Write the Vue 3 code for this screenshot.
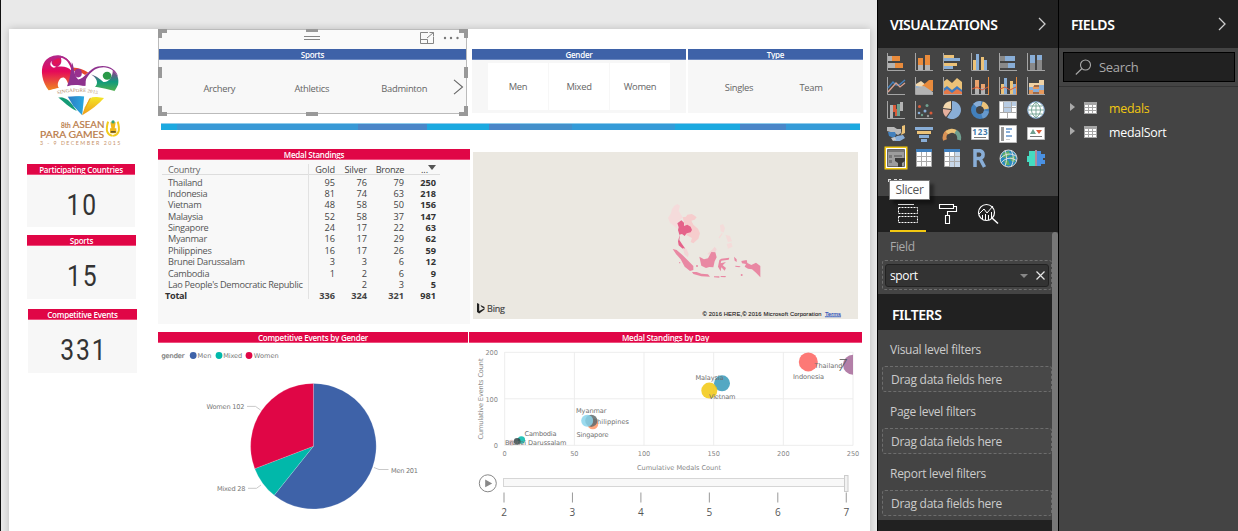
<script setup>
const stats = [
  { title: 'Participating Countries', value: '10', cls: 'first' },
  { title: 'Sports', value: '15', cls: 'second' },
  { title: 'Competitive Events', value: '331', cls: 'third' },
]
const rows = [
  ['Thailand', 95, 76, 79, 250],
  ['Indonesia', 81, 74, 63, 218],
  ['Vietnam', 48, 58, 50, 156],
  ['Malaysia', 52, 58, 37, 147],
  ['Singapore', 24, 17, 22, 63],
  ['Myanmar', 16, 17, 29, 62],
  ['Philippines', 16, 17, 26, 59],
  ['Brunei Darussalam', 3, 3, 6, 12],
  ['Cambodia', 1, 2, 6, 9],
  ["Lao People's Democratic Republic", '', 2, 3, 5],
]
const cx = 313.4
const cy = 446.2
const r = 62.8
const total = 331
const point = (n) => {
  const a = (n / total) * Math.PI * 2
  return `${cx + r * Math.sin(a)} ${cy - r * Math.cos(a)}`
}
const slice = (from, to) =>
  `M${cx} ${cy}L${point(from)}A${r} ${r} 0 ${to - from > total / 2 ? 1 : 0} 1 ${point(to)}Z`
const slices = [
  { d: slice(0, 201), fill: '#3e62a8' },
  { d: slice(201, 229), fill: '#01b8aa' },
  { d: slice(229, 331), fill: '#e00646' },
]
const bubbles = [
  { x: 511.5, y: 442.6, r: 2.8, fill: '#dfbfbf' },
  { x: 521.4, y: 440, r: 3.7, fill: '#01b8aa' },
  { x: 517.2, y: 441.3, r: 3.4, fill: '#374649' },
  { x: 592.8, y: 423.8, r: 5.5, fill: '#fe9666' },
  { x: 591.3, y: 420.8, r: 6.1, fill: '#5f6b6d' },
  { x: 587.2, y: 420.8, r: 6, fill: '#8ad4eb' },
  { x: 722, y: 383.3, r: 8, fill: '#3599b8' },
  { x: 709.3, y: 390.6, r: 8, fill: '#f2c80f' },
  { x: 808.3, y: 361.9, r: 9.5, fill: '#fd625e' },
  { x: 853, y: 364.8, r: 10, fill: '#a66999' },
]
const xTicks = [0, 50, 100, 150, 200, 250]
const yTicks = [200, 100, 0]
const days = [2, 3, 4, 5, 6, 7]
const filters = ['Visual level filters', 'Page level filters', 'Report level filters']
</script>

<template>
  <div class="app">
    <section class="canvas">
      <div class="page">
        <aside class="side">
          <svg class="logo" viewBox="100 150 280 300" width="93" height="100">
            <defs>
              <linearGradient id="lg1" x1="0" y1="0" x2="0" y2="1">
                <stop offset="0" stop-color="#b0288c" /><stop offset=".45" stop-color="#e5085a" /><stop offset="1" stop-color="#ef8a1f" />
              </linearGradient>
              <linearGradient id="lg2" x1="0" y1="0" x2="0" y2="1">
                <stop offset="0" stop-color="#9c3590" /><stop offset=".5" stop-color="#0f9a7c" /><stop offset="1" stop-color="#5fb545" />
              </linearGradient>
              <linearGradient id="lg3" x1="0" y1="0" x2="1" y2="0">
                <stop offset="0" stop-color="#2b79c2" /><stop offset="1" stop-color="#2ba9e0" />
              </linearGradient>
              <linearGradient id="lg4" x1="0" y1="0" x2="0" y2="1">
                <stop offset="0" stop-color="#f4ea28" /><stop offset="1" stop-color="#f09a1c" />
              </linearGradient>
            </defs>
            <path d="M148 272C128 248 121 211 132 190C142 171 163 163 181 166C204 171 216 187 220 207L217 238L207 256C200 232 193 230 184 234C174 244 172 256 178 264Z" fill="url(#lg1)" />
            <path d="M184 173C200 176 211 190 216 212C205 201 190 197 172 201C183 196 188 188 184 173Z" fill="#fff" />
            <path d="M181 168C204 172 214 188 218 207" fill="none" stroke="#a32f90" stroke-width="3" />
            <path d="M157 182C153 190 160 199 171 200L163 203C151 200 149 189 157 182Z" fill="#fff" />
            <ellipse cx="172" cy="184" rx="13" ry="8" transform="rotate(-28 172 184)" fill="#e21457" />
            <path d="M219 202C239 203 252 208 266 217L257 225C246 216 232 211 219 213Z" fill="#e54731" />
            <path d="M202 259C211 238 213 220 217 186C225 199 221 224 236 238C256 236 269 205 295 199C325 192 353 208 356 231C344 207 323 197 300 203C280 208 267 224 260 237C257 246 260 256 257 260C240 254 220 253 202 259Z" fill="#8e318e" />
            <ellipse cx="236" cy="219" rx="11" ry="13" fill="#9a318f" />
            <path d="M275 223C288 226 303 237 312 246C329 248 341 226 340 211C354 220 360 236 356 254C350 268 344 276 338 279L284 263C301 249 291 233 275 223Z" fill="url(#lg2)" />
            <ellipse cx="323" cy="227" rx="13" ry="12" fill="#2a9a49" />
            <path d="M175 291C190 291 204 296 215 310L232 333C211 324 192 306 175 291Z" fill="#159b76" />
            <path d="M204 289Q228 287 254 289L248 346L221 317Z" fill="url(#lg3)" />
            <path d="M248 346L256 322Q264 304 278 292L319 289Q289 323 248 346Z" fill="url(#lg4)" />
            <path d="M248 346L269 296L276 292L258 326Z" fill="#eea21b" />
            <path d="M138 274Q234 240 346 273L336 297Q240 280 152 296Z" fill="#fff" />
            <path id="arc" d="M174 283Q234 267 295 283" fill="none" />
            <text font-size="15" fill="#b0855c" font-family="Liberation Serif, serif"><textPath href="#arc" textLength="121">SINGAPORE 2015</textPath></text>
            <g fill="#b87945" stroke="#b87945" stroke-width=".6" font-family="Lato, sans-serif">
              <text x="184" y="384" font-size="20" textLength="29" lengthAdjust="spacingAndGlyphs">8th</text>
              <text x="220" y="384" font-size="30" textLength="95" lengthAdjust="spacingAndGlyphs">ASEAN</text>
              <text x="121" y="413" font-size="30" textLength="193" lengthAdjust="spacingAndGlyphs">PARA GAMES</text>
              <text x="121" y="436" font-size="16" textLength="242" stroke="none" opacity=".8">3 - 9 DECEMBER 2015</text>
            </g>
            <g fill="none" stroke="#f2cc1d" stroke-width="6">
              <path d="M326 365Q314 404 340 408M355 365Q367 404 341 408" />
            </g>
            <path d="M333 367H349L346 385H351V400H332V385H336Z" fill="#efb81a" />
            <circle cx="341" cy="366" r="5" fill="#36a276" />
            <path d="M334 396H349" stroke="#403b26" stroke-width="4" />
          </svg>
          <article v-for="s in stats" :key="s.title" class="stat" :class="s.cls">
            <h3 class="bar red">{{ s.title }}</h3>
            <div class="value">{{ s.value }}</div>
          </article>
        </aside>

        <main class="main">
          <div class="slicers">
            <div class="slicer selected">
              <div class="tools">
                <svg width="309" height="20" viewBox="0 0 309 20" fill="none" stroke="#858585">
                  <path d="M146 7.5H162M146 10.5H162" />
                  <path d="M270 3.5H262.5V14.5H275.5V8M262.5 10.5H269.5V14.5M269 9L275.5 3.5M271.5 3.5H275.5V7.5" />
                  <g fill="#777" stroke="none"><circle cx="287" cy="9" r="1.2" /><circle cx="293" cy="9" r="1.2" /><circle cx="299.500" cy="9" r="1.2" /></g>
                </svg>
              </div>
              <h3 class="bar blue">Sports</h3>
              <div class="opts sports"><span>Archery</span><span>Athletics</span><span>Badminton</span></div>
              <svg class="next" width="11" height="16" viewBox="0 0 11 16"><path d="M1 .8L9.500 8L1 15.200" fill="none" stroke="#666" stroke-width="1.100" /></svg>
              <svg class="handles" width="310" height="87" viewBox="0 0 310 87" fill="#999">
                <path d="M0 0H9V4H4V9H0ZM310 0H301V4H306V9H310ZM0 87V77H4V83H9V87ZM310 87V77H306V83H301V87ZM148 0H160V3H148ZM148 83H160V87H148ZM0 38H4V49H0ZM306 38H310V49H306Z" />
              </svg>
            </div>
            <div class="slicer gender">
              <h3 class="bar blue">Gender</h3>
              <div class="opts tiles"><span>Men</span><span>Mixed</span><span>Women</span></div>
            </div>
            <div class="slicer type">
              <h3 class="bar blue">Type</h3>
              <div class="opts types"><span>Singles</span><span>Team</span></div>
            </div>
          </div>

          <div class="strip"></div>

          <div class="middle">
            <div class="standings">
              <h3 class="bar red">Medal Standings</h3>
              <div class="table">
                <div class="tr th"><span>Country</span><span>Gold</span><span>Silver</span><span>Bronze</span><span>...<i class="sort"></i></span></div>
                <div v-for="row in rows" :key="row[0]" class="tr"><span v-for="(c, i) in row" :key="i">{{ c }}</span></div>
                <div class="tr total"><span>Total</span><span>336</span><span>324</span><span>321</span><span>981</span></div>
              </div>
            </div>
            <svg class="map" width="385" height="167" viewBox="0 0 385 167">
              <rect width="385" height="167" fill="#ebe8e1" />
              <g transform="translate(177 28) scale(.33333)">
                <path d="M72 78L82 72L90 77L86 92L92 103L98 112L90 120L84 128L82 148L72 138L60 128L54 113L62 102L66 88Z" fill="#f5dbdb" />
                <path d="M98 112L108 110L112 104L125 102L132 106L140 112L134 119L124 122L130 134L144 146L150 160L145 176L130 190L122 186L126 174L110 166L104 150L104 134Z" fill="#f6cdcd" />
                <path d="M82 130L94 121L102 128L102 138L112 134L122 140L126 150L122 157L110 160L104 168L96 162L88 164L84 150L86 142Z" fill="#e5638a" />
                <path d="M90 162L88 180L96 192L106 206L98 206L86 196L84 184Z" fill="#e5638a" />
                <path d="M98 204L110 208L116 222L114 232L104 224ZM172 222L188 208L194 200L200 208L194 220L182 226Z" fill="#f3d5d6" />
                <path d="M210 136L219 132L225 144L221 158L212 154ZM226 164L240 168L246 184L234 186ZM230 192L244 188L248 200L234 206ZM206 172L216 158L218 162L208 176Z" fill="#f4dcda" />
                <path d="M68 207L80 210L98 226L116 244L130 258L130 270L120 273L104 260L92 238L78 222Z" fill="#e988a3" />
                <path d="M126 276L140 276L154 281L174 283L180 290L154 289L130 282ZM192 289L208 289L208 293L192 292ZM212 288L228 288L226 292L212 291Z" fill="#e988a3" />
                <path d="M148 230L162 238L174 235L184 216L196 217L200 232L194 244L190 262L178 261L168 264L154 257Z" fill="#e988a3" />
                <path d="M208 240L214 236L238 233L236 239L214 242L212 250L228 246L218 256L228 264L224 272L214 262L212 274L204 260Z" fill="#e988a3" />
                <path d="M252 230L260 238L260 246L254 242ZM256 257L272 259L268 262L256 260ZM274 243L290 240L292 249L304 255L318 248L331 258V292L318 278L306 268L294 266L284 260L288 252L276 250Z" fill="#e988a3" />
                <circle cx="141" cy="258" r="3" fill="#e988a3" /><circle cx="275" cy="285" r="3" fill="#e988a3" /><circle cx="89" cy="248" r="2" fill="#e988a3" />
              </g>
              <path d="M4 151L6.200 152V159L11 156.500L8.500 155L7.500 153L11.500 155V157.500L6.200 161.500L4 160Z" fill="#222" />
              <text x="14" y="159.500" font-size="9" fill="#444" stroke="#444" stroke-width=".2" textLength="18">Bing</text>
              <text x="229.500" y="163.500" font-size="5.800" fill="#222" stroke="#222" stroke-width=".1" textLength="119" font-family="Liberation Sans">© 2016 HERE,© 2016 Microsoft Corporation</text>
              <text x="352" y="163.500" font-size="5.800" fill="#123fb4" stroke="#123fb4" stroke-width=".1" text-decoration="underline" textLength="16" font-family="Liberation Sans">Terms</text>
            </svg>
          </div>

          <div class="bottom">
            <div class="chart pie">
              <h3 class="bar red">Competitive Events by Gender</h3>
              <svg width="310" height="188" viewBox="158 343 310 188" class="axis">
                <text x="161.500" y="358" textLength="23" stroke="#777" stroke-width=".2">gender</text>
                <circle cx="193.200" cy="355.500" r="3.400" fill="#3e62a8" /><text x="197.500" y="358" textLength="14">Men</text>
                <circle cx="219" cy="355.500" r="3.400" fill="#01b8aa" /><text x="223.200" y="358" textLength="19">Mixed</text>
                <circle cx="249" cy="355.500" r="3.400" fill="#e00646" /><text x="253.800" y="358" textLength="25">Women</text>
                <path v-for="s in slices" :key="s.fill" :d="s.d" :fill="s.fill" stroke="#fff" stroke-opacity=".35" stroke-width=".5" />
                <g fill="none" stroke="#bbb" stroke-width=".8"><path d="M247 406.400H255.500L260.500 410M248 488.300H256.500L261 485M374 467.500L379 469.500H388.500" /></g>
                <text x="206.500" y="409" textLength="38">Women 102</text>
                <text x="217" y="491" textLength="28.500">Mixed 28</text>
                <text x="391" y="473" textLength="27">Men 201</text>
              </svg>
            </div>
            <div class="chart bubble">
              <h3 class="bar red">Medal Standings by Day</h3>
              <svg width="393" height="188" viewBox="469 343 393 188" class="axis">
                <defs><clipPath id="plot"><rect x="500" y="345" width="353" height="101" /></clipPath></defs>
                <g stroke="#ededed">
                  <path v-for="t in xTicks" :key="t" :d="`M${504.7 + t * 1.3932} 352V445.500`" />
                  <path v-for="t in yTicks" :key="t" :d="`M504.500 ${445.300 - t * .465}H853`" />
                </g>
                <g fill="#888">
                  <text v-for="t in xTicks" :key="'x' + t" :x="504.7 + t * 1.3932" y="456" text-anchor="middle">{{ t }}</text>
                  <text v-for="t in yTicks" :key="'y' + t" x="498" :y="448 - t * .465" text-anchor="end">{{ t }}</text>
                  <text x="637" y="470" textLength="84">Cumulative Medals Count</text>
                  <text transform="translate(483.200 439.500) rotate(-90)" textLength="81">Cumulative Events Count</text>
                </g>
                <g clip-path="url(#plot)" fill-opacity=".85"><circle v-for="(b, i) in bubbles" :key="i" :cx="b.x" :cy="b.y" :r="b.r" :fill="b.fill" /></g>
                <text x="837.500" y="371" class="frame">7</text>
                <g fill="#707070">
                  <text x="814.500" y="368" textLength="28">Thailand</text>
                  <text x="793" y="379" textLength="31">Indonesia</text>
                  <text x="695.500" y="380" textLength="28">Malaysia</text>
                  <text x="709" y="399" textLength="26.500">Vietnam</text>
                  <text x="576" y="413" textLength="30.500">Myanmar</text>
                  <text x="593" y="424" textLength="36">Philippines</text>
                  <text x="576.500" y="437" textLength="32">Singapore</text>
                  <text x="524.500" y="436" textLength="32">Cambodia</text>
                  <text x="505" y="445" textLength="61.500">Brunei Darussalam</text>
                </g>
                <circle cx="487.800" cy="483.300" r="8.500" fill="#fff" stroke="#888" /><path d="M485.200 479.500V487.300L492.200 483.400Z" fill="#888" />
                <rect x="503.500" y="478.500" width="342" height="8" fill="#f8f8f8" stroke="#d6d6d6" />
                <rect x="844.500" y="475.500" width="3.500" height="16" fill="#f2f2f2" stroke="#ccc" />
                <g v-for="(d, i) in days" :key="d">
                  <path :d="`M${504 + i * 68.45} 492.500V502.500`" stroke="#999" />
                  <text :x="504 + i * 68.45" y="516" text-anchor="middle" class="day">{{ d }}</text>
                </g>
              </svg>
            </div>
          </div>
        </main>
      </div>
    </section>

    <section class="pane viz">
      <header class="head"><h2 class="w-viz">VISUALIZATIONS</h2><svg class="chev" width="8" height="14" viewBox="0 0 8 14"><path d="M1 1L7 7L1 13" /></svg></header>
      <div class="gallery">
        <svg viewBox="0 0 18 18"><path class="ax" d="M.5 0V17.500H18" /><path fill="#b3b3b3" d="M1 3h4v5H1zM1 10h7v5H1z" /><path fill="#e98b3c" d="M5 3h8v5H5zM8 10h8v5H8z" /></svg>
        <svg viewBox="0 0 18 18"><path class="ax" d="M.5 0V17.500H18" /><path fill="#b3b3b3" d="M3 12h5v5H3zM10 12h5v5h-5z" /><path fill="#e98b3c" d="M3 5h5v7H3zM10 2h5v10h-5z" /></svg>
        <svg viewBox="0 0 18 18"><path class="ax" d="M.5 0V17.500H18" /><path fill="#ecc278" d="M1 2h10v3H1zM1 10h13v3H1z" /><path fill="#89aed7" d="M1 5h16v3H1zM1 13h9v3H1z" /></svg>
        <svg viewBox="0 0 18 18"><path class="ax" d="M.5 0V17.500H18" /><path fill="#ecc278" d="M2 7h3v10H2zM10 4h3v13h-3z" /><path fill="#89aed7" d="M5 1h3v16H5zM13 7h3v10h-3z" /></svg>
        <svg viewBox="0 0 18 18"><path class="ax" d="M.5 0V17.500H18" /><path fill="#898989" d="M1 3h5v5H1zM1 10h8v5H1z" /><path fill="#89aed7" d="M6 3h10v5H6zM9 10h7v5H9z" /></svg>
        <svg viewBox="0 0 18 18"><path class="ax" d="M.5 0V17.500H18" /><path fill="#898989" d="M3 10h5v7H3zM10 7h5v10h-5z" /><path fill="#89aed7" d="M3 2h5v8H3zM10 2h5v5h-5z" /></svg>

        <svg viewBox="0 0 18 18"><path class="ax" d="M.5 0V17.500H18" /><path d="M1 11L6 5L9 8L12 8L18 3" fill="none" stroke="#4280bd" stroke-width="1.300" /><path d="M1 15L9 6L13 10L18 6" fill="none" stroke="#d9a291" stroke-width="1.300" /></svg>
        <svg viewBox="0 0 18 18"><path class="ax" d="M.5 0V17.500H18" /><path fill="#f4d7aa" d="M1 7L6 4L11 8L14 12H1z" /><path fill="#89aed7" d="M1 9L9 10V14H1z" /><path fill="#e98b3c" d="M7 9L14 3H18V14H14z" /><path fill="#b3b3b3" d="M1 11L9 9L18 15V17H1z" /></svg>
        <svg viewBox="0 0 18 18"><path fill="#3d7bc0" d="M0 8H19V18H0z" /><path fill="#ecc278" d="M0 5L4 2L9 6L14 1L19 5V13L14 9L9 13L4 9L0 12z" /><path fill="#e67a49" d="M0 15L4 12L9 16L14 12L19 15V18H0z" /><path class="ax" d="M.5 0V17.500H19" /></svg>
        <svg viewBox="0 0 18 18"><path class="ax" d="M.5 0V17.500H18" /><path fill="#e9a36d" d="M4 3h4v9H4zM10 7h4v4h-4z" /><path fill="#b3b3b3" d="M4 12h4v5H4zM10 11h4v6h-4z" /><path d="M1 12L6 10L11 13L17 10" fill="none" stroke="#d95b39" /><path d="M17.500 0V18" stroke="#e98b3c" /></svg>
        <svg viewBox="0 0 18 18"><path class="ax" d="M.5 0V17.500H18" /><path fill="#ecc278" d="M2 7h3v10H2zM11 4h3v13h-3z" /><path fill="#89aed7" d="M5 1h3v16H5zM14 7h3v10h-3z" /><path d="M1 12L6 10L11 13L17 10" fill="none" stroke="#d95b39" /><path d="M17.500 0V18" stroke="#e98b3c" /></svg>
        <svg viewBox="0 0 18 18"><path class="ax" d="M.5 0V17.500H18" /><path fill="#f0d2a5" d="M2 6h5v4H2zM7 6h5v3H7zM12 3h5v5h-5z" /><path fill="#89aed7" d="M2 10h4v3H2zM12 8h5v5h-5zM6 12h6v3H6z" /><path fill="#e69a5e" d="M2 13h4v4H2zM6 9h6v3H6zM12 13h5v4h-5z" /><path fill="#9d6a4a" d="M7 8h5v2H7zM6 15h6v2H6z" /></svg>

        <svg viewBox="0 0 18 18"><path class="ax" d="M.5 0V17.500H18" /><path fill="#b3b3b3" d="M3 4h3v13H3zM13 1h3v9h-3z" /><path fill="#d95b39" d="M6 4h3v7H6zM8 8h2v7H8z" /><path fill="#70a090" d="M10 3h3v12h-3z" /></svg>
        <svg viewBox="0 0 18 18"><path class="ax" d="M.5 0V17.500H18" /><g fill="#d95b39"><circle cx="4.500" cy="5.500" r="1.500" /><circle cx="16" cy="12" r="1.500" /></g><g fill="#70a090"><circle cx="12" cy="4.500" r="1.500" /><circle cx="7" cy="14" r="1.200" /></g><g fill="#89aed7"><circle cx="4" cy="12" r="1.300" /><circle cx="10" cy="10" r="1.500" /></g><circle cx="13" cy="15" r="1.200" fill="#999" /></svg>
        <svg viewBox="0 0 18 18"><path fill="#89aed7" d="M9 9V0A9 9 0 1 1 4 16.500Z" /><path fill="#f2d7ad" d="M8 8V0A9 9 0 0 0 0 7Z" /><path fill="#e6b09e" d="M8 9L0 8A9 9 0 0 0 3 16Z" /></svg>
        <svg viewBox="0 0 18 18" fill="none" stroke-width="5"><circle cx="9" cy="9" r="6.500" stroke="#4280bd" /><path d="M11 2.800A6.500 6.500 0 0 1 15.500 8" stroke="#ecc278" /><path d="M4 4.500A6.500 6.500 0 0 1 10 2.600" stroke="#89aed7" /><path d="M15.500 10A6.500 6.500 0 0 1 11 15.200" stroke="#6799cd" /></svg>
        <svg viewBox="0 0 18 18"><path fill="#fff" stroke="#b8b8b8" d="M.5.5h17v17H.5z" /><path fill="#b8cce3" d="M5 1h8v5H5zM5 7h7v4H5zM13 1h4v4h-4z" /><path fill="none" stroke="#aaa" d="M4.500 1V11M1 11.500H17M12.500 1V11M5 6.500H17M8.500 12V17" /></svg>
        <svg viewBox="0 0 18 18"><circle cx="9" cy="9" r="8.300" fill="#fff" stroke="#89aed7" /><path fill="none" stroke="#70a090" stroke-width=".9" d="M1 9H17M2.500 5H15.500M2.500 13H15.500M9 1V17M9 1C3 6 3 12 9 17M9 1C15 6 15 12 9 17" /></svg>

        <svg viewBox="0 0 18 18"><path fill="#b9b9b9" d="M0 2H7L10 4H14V8L11 10L7 8L0 6Z" /><path fill="#4280bd" d="M1 7H8L9 10L7 13L2 11Z" /><path fill="#89aed7" d="M10 11L16 10L18 13L13 16L8 16L5 14Z" /><path fill="#ecc278" d="M15 1L18 0V8L14 10L15 6Z" /><path fill="#c7c7c7" d="M4 13L8 12L9 15L6 16Z" /></svg>
        <svg viewBox="0 0 18 18"><path fill="#89aed7" d="M0 2h18v3H0zM4 10h10v3H4zM6 14h6v3H6z" /><path fill="#ecc278" d="M2 6h14v3H2z" /></svg>
        <svg viewBox="0 0 18 18" fill="none" stroke-width="4"><path d="M2 15A7 7 0 0 1 5 6.500" stroke="#d99255" /><path d="M4 8A7 7 0 0 1 13 7" stroke="#ecc278" /><path d="M12.500 6.500A8 8 0 0 1 16 15" stroke="#70a090" /></svg>
        <svg viewBox="0 0 18 18"><path fill="#fff" stroke="#bbb" d="M.5 2.500h17v12H.5z" /><text x="1.200" y="9.800" font-size="8" font-weight="700" fill="#427aa9" textLength="15.500">123</text><path d="M3 12.500H15" stroke="#777" /></svg>
        <svg viewBox="0 0 18 18"><path fill="#fff" stroke="#bbb" d="M.5.5h17v17H.5z" /><path fill="#999" d="M2 2h3v14H2z" /><path fill="#89aed7" d="M7 3h6v2H7zM7 6h4v2H7zM7 10h6v2H7z" /><path fill="#ccc" d="M7 14h4v1H7z" /></svg>
        <svg viewBox="0 0 18 18"><path fill="#fff" stroke="#bbb" d="M.5 2.500h17v12H.5z" /><path fill="#70a090" d="M3 9L6 4L9 9z" /><path fill="#d95b39" d="M9 5H15L12 9z" /><path d="M3 11.500H15" stroke="#777" /></svg>

        <svg class="active" viewBox="0 0 20 20"><path fill="#9d9d9d" stroke="#666" d="M1.500 1.500h17v17h-17z" /><path fill="#777" d="M2 2h16v2H2zM3 7h3v3H3zM3 12h3v3H3zM8 7h8v2H8z" /><path fill="#3a3a3a" d="M9 10H19V13L16 15V19H12V15L9 13Z" /></svg>
        <svg class="grid" viewBox="0 0 18 18"><path fill="#fff" stroke="#aaa" d="M.5 1.500h15v16H.5z" /><path fill="#4280bd" d="M0 0h16v3H0z" /><path fill="none" stroke="#aaa" d="M0 7.500H16M0 12.500H16M5.500 3V18M10.500 3V18" /></svg>
        <svg class="grid" viewBox="0 0 18 18"><path fill="#fff" stroke="#aaa" d="M.5 1.500h15v16H.5z" /><path fill="#c8d8ea" d="M11 3h5v15h-5zM6 13h5v5H6zM6 8h5v5H6z" /><path fill="#4280bd" d="M0 0h16v3H0z" /><path fill="none" stroke="#aaa" d="M0 7.500H16M0 12.500H16M5.500 3V18M10.500 3V18" /></svg>
        <svg class="grid" viewBox="0 0 18 18"><path fill="none" stroke="#89aed7" stroke-width="3.500" d="M3 18V1.700H8A4 4 0 0 1 8 9.500H3M8 9.500L12.500 18" /></svg>
        <svg viewBox="0 0 18 18"><circle cx="9.500" cy="9.500" r="8.500" fill="#288ac0" stroke="#d8d8d8" /><g fill="#5cad66"><path d="M4 4L10 2L11 6L7 9L3 8zM11 8L16 7L16 13L12 12zM5 12L9 11L11 16H7z" /></g><path fill="none" stroke="#ddd" d="M1 10C6 4 12 4 17 7M2 14C7 8 13 8 18 12M6 1C8 7 8 12 6 17M12 1C15 7 15 12 12 18" /></svg>
        <svg viewBox="0 0 18 18"><path fill="#45dbc0" d="M2 2H8V17H2V13H0V7H2Z" /><path fill="#4a91e2" d="M9 2H14V5H18V9H16V11H18V15H14V17H9Z" /><path fill="#b18a99" d="M8 1h2v16H8z" /></svg>
        <svg viewBox="0 0 18 18"><path fill="#ddd" d="M1 6h3v3H1zM7 6h3v3H7zM12 6h3v3h-3z" /></svg>
        <div class="tip">Slicer</div>
      </div>
      <div class="tabs">
        <svg width="181" height="36" viewBox="878 196 181 36" fill="none" stroke="#fff">
          <path d="M898 204.500H914" /><path d="M898.500 207.500H917.500V213.500H898.500ZM898.500 216.500H917.500V222.500H898.500Z" stroke-dasharray="2 1" />
          <path d="M939.500 204.500H953.500V208.500H939.500ZM953.500 206.500H956.500V211.500H947.500V215M945.500 215.500H949.500V223.500H945.500Z" stroke-width="1.100" />
          <circle cx="986.500" cy="212.500" r="8" stroke-width="1.200" /><path d="M992 218L998 223.500" stroke-width="1.500" /><path d="M979 214L984 209L987 213L993 206M982.500 215V219M985.500 214V220M988.500 215V220M991.500 212V218" />
          <path d="M890 231H926" stroke="#f2c811" stroke-width="2" />
        </svg>
      </div>
      <div class="scroller">
        <div class="scroll-body">
          <div class="fieldwell">
            <label class="flabel">Field</label>
            <div class="dash outer"><div class="chip"><span>sport</span><i class="caret"></i><svg width="9" height="9" viewBox="0 0 9 9"><path d="M.5.5L8.500 8.500M8.500.5L.5 8.500" stroke="#e6e6e6" stroke-width="1.200" /></svg></div></div>
          </div>
          <h2 class="filters">FILTERS</h2>
          <div class="flist">
            <div v-for="f in filters" :key="f" class="fitem"><label>{{ f }}</label><div class="dash drop"><span>Drag data fields here</span></div></div>
          </div>
          <div class="foot"></div>
        </div>
        <div class="thumb"></div>
      </div>
    </section>

    <section class="pane fields">
      <header class="head"><h2 class="w-fields">FIELDS</h2><svg class="chev" width="8" height="14" viewBox="0 0 8 14"><path d="M1 1L7 7L1 13" /></svg></header>
      <div class="searchwrap">
        <div class="search"><svg width="17" height="17" viewBox="0 0 17 17" fill="none" stroke="#aaa" stroke-width="1.100"><circle cx="10.500" cy="6" r="5" /><path d="M7 9.500L.8 15.500" /></svg><span>Search</span></div>
      </div>
      <div class="tree">
        <div v-for="(n, i) in ['medals', 'medalSort']" :key="n" class="node">
          <i class="tri"></i>
          <svg width="13" height="12" viewBox="0 0 13 12"><path fill="#a6a6a6" d="M0 0h13v12H0z" /><path fill="#fff" d="M1 3h3v2H1zM5 3h3v2H5zM9 3h3v2H9zM1 6h3v2H1zM5 6h3v2H5zM9 6h3v2H9zM1 9h3v2H1zM5 9h3v2H5zM9 9h3v2H9z" /></svg>
          <span :class="{ hot: i === 0 }">{{ n }}</span>
        </div>
      </div>
    </section>
  </div>
</template>

<style>
html, body { overflow: hidden; background: #222; }
</style>

<style scoped>
* { box-sizing: border-box; margin: 0; padding: 0; }
svg { display: block; flex: none; }
.app { display: flex; width: 1238px; height: 531px; overflow: hidden; font-family: "Open Sans", "Noto Sans", sans-serif; }
.canvas { width: 878px; height: 531px; background: #e9e9e9; border-left: 1px solid #111; border-right: 1px solid #000; padding: 29px 0 0 8px; overflow: hidden; }
.page { display: flex; width: 861px; height: 520px; background: #fff; box-shadow: 0 0 8px rgba(0,0,0,.2); }
.side { width: 149px; padding-left: 18px; }
.logo { margin: 21px 0 14px 6px; }
.stat { width: 108px; height: 63px; background: #f7f7f7; margin-bottom: 8px; }
.stat.second { width: 109px; height: 64px; margin-bottom: 10px; }
.stat.third { width: 109px; height: 64px; margin-left: 1px; }
.bar { height: 11px; line-height: 12px; font-size: 8px; font-weight: 600; letter-spacing: -.22px; color: #fff; text-align: center; white-space: nowrap; overflow: hidden; }
.red { background: #e00646; border-bottom: 1px solid #ee4f7e; }
.blue { background: #3e62a8; border-bottom: 1px solid #6b88c0; }
.value { height: 52px; text-align: center; font: 29px/60px Roboto, sans-serif; letter-spacing: 2.2px; text-indent: 3px; color: #333; transform: scaleX(.85); }
.main { width: 709px; }
.slicers { display: flex; height: 85px; }
.slicer { background: #f7f7f7; height: 64px; margin-top: 20px; }
.slicer.selected { position: relative; width: 309px; height: 85px; margin: 0; border: 1px solid #bbb; background: #f8f8f8; }
.tools { display: flow-root; height: 19px; background: #fafafa; }
.tools svg { margin: -1px; }
.handles { position: absolute; left: -1px; top: -1px; }
.next { position: absolute; right: 2px; top: 49px; }
.gender { width: 214px; margin-left: 5px; }
.type { width: 175px; margin-left: 2px; }
.opts { display: flex; font-size: 9.400px; letter-spacing: -.3px; color: #666; align-items: center; }
.opts span { text-align: center; }
.sports { height: 54px; padding: 2px 0 0 14px; }
.sports span { width: 92.500px; }
.tiles { gap: 1px; height: 47px; margin: 3px 0 0 16px; }
.tiles span { width: 60px; height: 47px; line-height: 47px; background: #fff; }
.types { height: 53px; padding: 1px 0 0 15px; }
.types span { width: 72px; }
.strip { width: 699px; height: 7px; margin: 9px 0 19px 3px; border-top: 1px solid #8fcceb; background: linear-gradient(90deg, #1ca9e0 0 16px, #3899d6 16px 197px, #4a86c8 197px 266px, #1ca9e0 266px 328px, #4a86c8 328px 359px, #4390cb 359px 411px, #349bd8 411px 514px, #1ca9e0 514px 579px, #4a86c8 579px 625px, #349bd8 625px 689px, #1ca9e0 689px); }
.middle { display: flex; height: 175px; }
.standings { width: 312px; height: 175px; background: #f8f8f8; }
.table { position: relative; margin: 3px 0 0 4px; width: 278px; font-size: 9.200px; letter-spacing: -.3px; color: #555; }
.table::after { content: ""; position: absolute; left: 146px; top: 1px; height: 135px; border-left: 1px solid #e2e2e2; }
.tr { display: grid; grid-template-columns: 142px 31px 32px 37px 32px; height: 11.400px; line-height: 11px; white-space: nowrap; }
.tr span { text-align: right; }
.tr span:first-child { text-align: left; padding-left: 6px; }
.tr span:nth-child(n+2) { letter-spacing: 0; }
.tr span:last-child { font-weight: 700; color: #333; }
.th { height: 12px; line-height: 14px; margin-bottom: 1.500px; border-bottom: 1px solid #ddd; color: #666; }
.tr.th span:nth-child(n+2) { letter-spacing: -.1px; }
.tr.th span:nth-child(4) { letter-spacing: -.35px; }
.th span:last-child { font-weight: 400; }
.tr span:nth-child(n+2):nth-child(-n+4) { color: #444; }
.total { font-weight: 700; }
.tr.total span:first-child { padding-left: 3px; }
.tr.total span { color: #333; }
.sort { display: inline-block; border: 4px solid transparent; border-top: 5px solid #555; border-bottom: 0; margin-bottom: 3px; }
.map { margin: 3px 0 0 3px; }
.bottom { display: flex; gap: 1px; margin-top: 8px; }
.pie { width: 310px; }
.bubble { width: 393px; }
.axis { font-family: "DejaVu Sans", sans-serif; font-size: 6.600px; fill: #777; }
.axis .day { font: 10px "Open Sans", sans-serif; fill: #555; }
.axis .frame { font: italic 300 17px "Open Sans", sans-serif; fill: #555; }

.pane { height: 531px; background: #444; color: #fff; }
.viz { width: 181px; border-right: 1px solid #000; }
.fields { width: 179px; }
.head { display: flex; align-items: center; justify-content: space-between; height: 48px; padding: 0 12px 0 12px; background: #212121; }
h2 { font: 600 14px "Noto Sans", sans-serif; letter-spacing: -.45px; color: #fff; }
.chev path { fill: none; stroke: #ccc; stroke-width: 1.300; }
.gallery { position: relative; display: grid; grid-template-columns: repeat(6, 28px); grid-auto-rows: 24px; height: 148px; padding: 5px 0 0 9px; }
.gallery svg { width: 18px; height: 18px; overflow: visible; }
.gallery svg.active { width: 22px; height: 22px; margin: -2px; border: 1px solid #f2c811; outline: 0; background: #fff; box-shadow: 0 0 0 .5px #f2c811; }
.gallery svg.grid { margin-left: 1px; }
.ax { fill: none; stroke: #a5a5a5; }
.tip { position: absolute; left: 11px; top: 132px; width: 41px; height: 20px; background: #fff; border: 1px solid #777; color: #555; font-size: 12px; line-height: 18px; letter-spacing: -.3px; text-align: center; box-shadow: 4px 4px 3px rgba(0,0,0,.4); }
.tabs { height: 36px; background: #212121; }
.scroller { display: flex; height: 299px; }
.scroll-body { width: 174px; }
.thumb { width: 6px; background: #777; border-radius: 3px 3px 0 0; }
.fieldwell { height: 62px; padding: 5px 0 0 4px; }
.flabel { display: block; height: 23px; padding-left: 8px; font-size: 12px; line-height: 20px; letter-spacing: -.3px; color: #aaa; }
.dash { width: 170px; border: 1px dashed #6d6d6d; border-radius: 3px; }
.outer { height: 30px; padding: 3px 2px; }
.chip { display: flex; align-items: center; width: 164px; height: 23px; padding: 0 3px 0 4px; background: #333; border: 1px solid #222; border-radius: 3px; font-size: 12px; letter-spacing: -.35px; }
.chip span { flex: 1; }
.caret { border: 4px solid transparent; border-top-color: #888; border-bottom: 0; margin-right: 8px; }
.filters { height: 36px; padding-left: 14px; line-height: 42px; background: #212121; }
.flist { height: 190px; padding: 9px 0 0 4px; }
.fitem { height: 62px; }
.fitem label { display: block; height: 27px; padding-left: 8px; font-size: 12px; line-height: 21px; letter-spacing: -.27px; color: #ccc; }
.drop { height: 26px; background: #484848; padding-left: 8px; font-size: 12px; line-height: 26px; letter-spacing: -.27px; color: #ccc; }
.foot { height: 11px; background: #212121; }
.searchwrap { height: 39px; padding: 4px 3px 0 4px; border-bottom: 1px solid #333; }
.search { display: flex; align-items: center; gap: 7px; height: 30px; padding-left: 11px; border: 1px solid #000; background: #212121; font-size: 13px; letter-spacing: -.3px; color: #aaa; }
.tree { padding: 9px 0 0 11px; }
.node { display: flex; align-items: center; height: 24px; font-size: 12.400px; letter-spacing: -.25px; }
.tri { border: 4px solid transparent; border-left: 5px solid #aaa; border-right: 0; margin: -2px 9px 0 0; }
.node span { margin-left: 12px; margin-top: 1px; }
.hot { color: #f2c811; }
</style>
